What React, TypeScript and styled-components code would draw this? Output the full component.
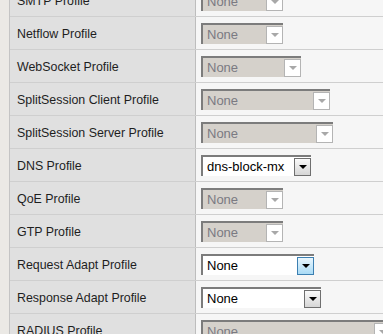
import styled, { createGlobalStyle } from "styled-components";

type Tone = "disabled" | "normal" | "focused";

const rows: { label: string; value: string; width: number; tone: Tone }[] = [
  { label: "SMTP Profile", value: "None", width: 82, tone: "disabled" },
  { label: "Netflow Profile", value: "None", width: 82, tone: "disabled" },
  { label: "WebSocket Profile", value: "None", width: 100, tone: "disabled" },
  { label: "SplitSession Client Profile", value: "None", width: 129, tone: "disabled" },
  { label: "SplitSession Server Profile", value: "None", width: 132, tone: "disabled" },
  { label: "DNS Profile", value: "dns-block-mx", width: 110, tone: "normal" },
  { label: "QoE Profile", value: "None", width: 82, tone: "disabled" },
  { label: "GTP Profile", value: "None", width: 82, tone: "disabled" },
  { label: "Request Adapt Profile", value: "None", width: 113, tone: "focused" },
  { label: "Response Adapt Profile", value: "None", width: 120, tone: "normal" },
  { label: "RADIUS Profile", value: "None", width: 190, tone: "disabled" },
];

export default function App() {
  return (
    <>
      <Global />
      <Page>
        <Table>
          {rows.map((r) => (
            <Row key={r.label}>
              <Label>{r.label}</Label>
              <Value>
                <Combo $tone={r.tone} $width={r.width}>
                  <ComboText $tone={r.tone}>{r.value}</ComboText>
                  <ArrowButton $tone={r.tone}>
                    <Arrow $tone={r.tone} />
                  </ArrowButton>
                </Combo>
              </Value>
            </Row>
          ))}
        </Table>
      </Page>
    </>
  );
}

const Global = createGlobalStyle`
  html, body {
    margin: 0;
    padding: 0;
    background: #ebe9e5;
    overflow: hidden;
  }
  body {
    font-family: "Liberation Sans", Arial, sans-serif;
    font-size: 13px;
  }
`;

const Page = styled.div`
  width: 383px;
  height: 334px;
  overflow: hidden;
  padding-left: 9px;
  box-sizing: border-box;
`;

const Table = styled.div`
  margin-top: -16px;
  border-left: 1px solid #c4c4c4;
  background: #f6f6f6;
`;

const Row = styled.div`
  display: grid;
  grid-template-columns: 186px 1fr;
  height: 33px;
  border-bottom: 1px solid #cfcfcf;
  box-sizing: border-box;
`;

const Label = styled.div`
  display: flex;
  align-items: center;
  padding-left: 7px;
  padding-top: 1px;
  background: #e0e0e0;
  border-right: 1px solid #bdbdbd;
  color: #1e1e1e;
  font-size: 12.4px;
  white-space: nowrap;
  box-sizing: border-box;
`;

const Value = styled.div`
  display: flex;
  align-items: center;
  padding-left: 5px;
  white-space: nowrap;
`;

const Combo = styled.div<{ $tone: Tone; $width: number }>`
  display: flex;
  flex-shrink: 0;
  width: ${(p) => p.$width}px;
  height: 21px;
  box-sizing: border-box;
  border-top: 2px solid #7c7c7c;
  border-left: 2px solid #7c7c7c;
  padding-top: 1px;
  background: ${(p) => (p.$tone === "disabled" ? "#d5d1cb" : "#ffffff")};
`;

const ComboText = styled.span<{ $tone: Tone }>`
  flex: 1;
  padding-left: 4px;
  line-height: 17px;
  font-size: 13px;
  color: ${(p) => (p.$tone === "disabled" ? "#7a7a82" : "#000000")};
  overflow: hidden;
`;

const ArrowButton = styled.span<{ $tone: Tone }>`
  display: flex;
  align-items: center;
  justify-content: center;
  width: 17px;
  height: 18px;
  box-sizing: border-box;
  border: 1px solid
    ${(p) =>
      p.$tone === "disabled"
        ? "#b4b4b4"
        : p.$tone === "focused"
        ? "#3c7fb1"
        : "#6f6f6f"};
  background: ${(p) =>
    p.$tone === "disabled"
      ? "#ffffff"
      : p.$tone === "focused"
      ? "linear-gradient(#eaf6fd, #a9dbf6)"
      : "linear-gradient(#fafafa, #d6d6d6)"};
`;

const Arrow = styled.span<{ $tone: Tone }>`
  width: 0;
  height: 0;
  margin-top: 1px;
  border-left: 4px solid transparent;
  border-right: 4px solid transparent;
  border-top: 4px solid
    ${(p) => (p.$tone === "disabled" ? "#a8a8a8" : "#000000")};
`;
